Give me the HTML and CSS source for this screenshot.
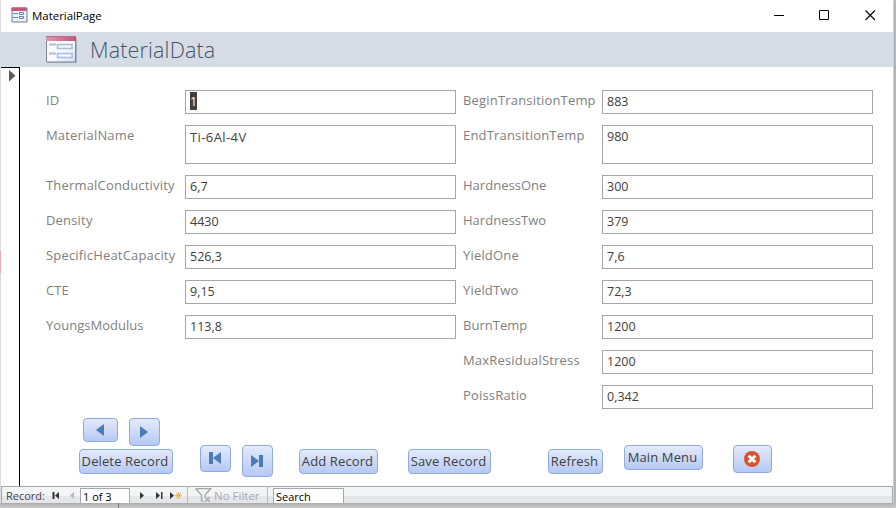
FILE: index.html
```html
<!DOCTYPE html>
<html lang="en">
<head>
<meta charset="utf-8">
<title>MaterialPage</title>
<link rel="stylesheet" href="styles.css">
</head>
<body>
<div class="window">
  <header class="titlebar">
    <svg class="appicon" width="17" height="16" viewBox="0 0 17 16"><path d="M1 1h15v14H1z" fill="#eef2fa" stroke="#6d7890"/><path d="M.5 .5h15V4H.5z" fill="#c4557b"/><path d="M2 6.500h5M2 10.500h5M8.500 5.500h4v2h-4zM8.500 9.500h4v2h-4z" fill="none" stroke="#6785b2"/></svg>
    <span class="caption">MaterialPage</span>
    <svg class="controls" width="104" height="12" viewBox="0 0 104 12" fill="none" stroke="#000"><path d="M1 5.500h10M46.500 .5h9v9h-9z"/><path d="M92.500 .5l9.500 9.500M102 .5l-9.500 9.500" stroke-width="1.100"/></svg>
  </header>
  <div class="formhead">
    <svg width="34" height="30" viewBox="0 0 34 30"><defs><linearGradient id="paper" x2="1" y2="1"><stop stop-color="#fff"/><stop offset=".55" stop-color="#f8faff"/><stop offset="1" stop-color="#d3ddef"/></linearGradient><linearGradient id="strip"><stop stop-color="#d99ab6"/><stop offset="1" stop-color="#c65277"/></linearGradient></defs><path d="M3 3h29v25H3z" fill="#8893a5" opacity=".55"/><path d="M1.500 1.500h29v25.500h-29z" fill="url(#paper)" stroke="#78849a"/><path d="M1 1h30v5H1z" fill="url(#strip)"/><path d="M1 1.500h30" stroke="#bd668a"/><path d="M4 9.500h7M4 18.500h7" stroke="#a9bedc" stroke-width="2"/><path d="M12.500 9.500h14.500v4H12.500zM12.500 18.500h14.500v4H12.500z" fill="#f3f7ff" stroke="#a9bedc" stroke-width="1.600"/></svg>
    <h1>MaterialData</h1>
  </div>
  <div class="body">
    <div class="selector"><svg width="7" height="12"><path d="M0 0l6.500 5.700L0 11.500z" fill="#5b5b5b"/></svg></div>
    <main>
      <div class="fields">
        <label>ID</label><div class="box"><span class="selected">1</span></div>
        <label>BeginTransitionTemp</label><div class="box">883</div>
        <label>MaterialName</label><div class="box name">Ti-6Al-4V</div>
        <label>EndTransitionTemp</label><div class="box">980</div>
        <label>ThermalConductivity</label><div class="box">6,7</div>
        <label class="tight">HardnessOne</label><div class="box">300</div>
        <label>Density</label><div class="box">4430</div>
        <label class="tight">HardnessTwo</label><div class="box">379</div>
        <label>SpecificHeatCapacity</label><div class="box">526,3</div>
        <label>YieldOne</label><div class="box">7,6</div>
        <label class="tight">CTE</label><div class="box">9,15</div>
        <label>YieldTwo</label><div class="box">72,3</div>
        <label class="tight">YoungsModulus</label><div class="box">113,8</div>
        <label class="tight">BurnTemp</label><div class="box">1200</div>
        <label class="right">MaxResidualStress</label><div class="box">1200</div>
        <label class="right">PoissRatio</label><div class="box">0,342</div>
      </div>
      <div class="steps">
        <button class="prev" aria-label="Previous"><svg width="8" height="12"><path d="M8 0v12L0 6z" fill="#4a7db5"/></svg></button>
        <button class="next" aria-label="Next"><svg width="8" height="12"><path d="M0 0v12l8-6z" fill="#4a7db5"/></svg></button>
      </div>
      <div class="actions">
        <button class="delete low">Delete Record</button>
        <button class="first" aria-label="First"><svg width="12" height="12"><path d="M0 0h4v12H0zM12 0v12L4 6z" fill="#4a7db5"/></svg></button>
        <button class="last" aria-label="Last"><svg width="12" height="12"><path d="M8 0h4v12H8zM0 0v12l8-6z" fill="#4a7db5"/></svg></button>
        <button class="add low">Add Record</button>
        <button class="save low">Save Record</button>
        <button class="refresh low">Refresh</button>
        <button class="menu">Main Menu</button>
        <button class="close" aria-label="Close"><svg width="16" height="16"><circle cx="8" cy="8" r="8" fill="#d9532e"/><path d="M4.700 4.700l6.600 6.600M11.300 4.700l-6.600 6.600" stroke="#fff" stroke-width="3"/></svg></button>
      </div>
    </main>
  </div>
  <footer>
    <span class="record">Record:</span>
    <svg class="nav-left" width="26" height="9"><path d="M.5 1h2v7h-2zM7 1v7L3 4.500z" fill="#333"/><path d="M22 1v7l-4-3.500z" fill="#b5b7ba"/></svg>
    <span class="position">1 of 3</span>
    <svg class="nav-right" width="44" height="9"><path d="M1 1v7l4-3.500zM17 1v7l4-3.500zM22 1h1.500v7H22zM31 1v7l4-3.500z" fill="#333"/><path d="M39.500 1v7M36 4.500h7M37 2l5 5M42 2l-5 5" stroke="#e6b65c"/></svg>
    <span class="divider"></span>
    <svg class="funnel" width="17" height="15" fill="none" stroke="#a5a7aa" stroke-width="1.300"><path d="M.7 .7h15L10 7v2M.7 .7L6.500 7v5.500l2 1.500M10 9l5 5M15 9l-5 5"/></svg>
    <span class="nofilter">No Filter</span>
    <span class="divider end"></span>
    <span class="search">Search</span>
  </footer>
</div>
<div class="marker"></div>
<div class="tick"></div>
</body>
</html>
```
FILE: styles.css
```css
* { box-sizing: border-box; }
body {
  margin: 0;
  width: 896px;
  height: 508px;
  overflow: hidden;
  position: relative;
  background: #c6c6c6;
  font-family: "Open Sans", "Noto Sans", sans-serif;
}
.window {
  width: 894px;
  height: 503px;
  border-left: 1px solid #dcdcdc;
  border-right: 1px solid #d5d5d5;
  background: #fff;
  box-shadow: 0 0 4px #8c8c8c;
  display: flex;
  flex-direction: column;
}
.titlebar { height: 32px; display: flex; align-items: flex-start; padding: 7px 16px 0 10px; flex: none; }
.caption { font-size: 11.5px; line-height: 17px; margin-left: 4px; letter-spacing: -.04px; color: #000; }
.controls { margin: 3px 0 0 auto; }
.formhead { height: 35px; flex: none; background: #d5dce6; display: flex; align-items: flex-start; padding: 3px 0 0 44px; }
h1 { margin: 0 0 0 11px; font-size: 21.5px; line-height: 30px; font-weight: 300; color: #44546a; letter-spacing: .15px; }
.body { flex: 1; min-height: 0; display: flex; }
.selector { width: 19px; border-top: 1px solid #000; border-right: 1px solid #000; padding: 2px 0 0 8px; line-height: 0; }
main { flex: 1; padding: 23px 0 0 26px; }
.fields {
  display: grid;
  grid-template-columns: 139px 271px 146px 271px;
  grid-template-rows: 24px 39px repeat(7, 24px);
  row-gap: 11px;
  height: 319px;
}
label { font-size: 13px; line-height: 20px; color: #7f7f7f; white-space: nowrap; letter-spacing: .18px; }
.tight { letter-spacing: .03px; }
label:nth-child(4n + 3), .right { padding-left: 7px; }
.right { grid-column: 3; }
.box { border: 1px solid #a6a6a6; padding: 1px 4px; font-size: 12.5px; line-height: 20px; color: #404040; letter-spacing: .02px; }
.name { font-size: 13px; letter-spacing: .4px; }
.selected { background: #404040; color: #fff; display: inline-block; width: 7px; height: 18px; line-height: 19px; }
.steps { display: flex; align-items: flex-start; gap: 11px; height: 27px; margin: 9px 0 0 37px; }
.actions { display: flex; align-items: flex-start; margin-left: 33px; }
button {
  border: 1px solid #8eabdc;
  border-radius: 4px;
  background: linear-gradient(#e3eafb, #cbd8f7 55%, #b5c9f5);
  padding: 0 2px 1px 0;
  display: flex;
  align-items: center;
  justify-content: center;
  flex: none;
  height: 25px;
  color: #404040;
  font: 13px/22px "Open Sans", sans-serif;
  letter-spacing: .12px;
  white-space: nowrap;
}
.low { margin-top: 4px; }
.prev { width: 35px; height: 24px; }
.next { width: 31px; height: 28px; padding-bottom: 0; }
.delete { width: 94px; }
.first { width: 31px; height: 27px; margin-left: 27px; }
.last { width: 31px; height: 32px; margin-left: 11px; }
.add { width: 79px; margin-left: 26px; }
.save { width: 83px; margin-left: 30px; }
.refresh { width: 55px; margin-left: 57px; }
.menu { width: 79px; margin-left: 21px; }
.close { width: 39px; height: 28px; margin-left: 30px; padding-bottom: 0; }
footer {
  height: 17px;
  flex: none;
  border: 1px solid #a5a8b0;
  border-bottom: 0;
  background: linear-gradient(#f3f4f6 9px, #e4e6ea 9px);
  display: flex;
  align-items: flex-start;
  font-size: 11.5px;
  line-height: 18px;
  color: #444;
  white-space: nowrap;
  overflow: hidden;
}
.record { width: 46px; margin-left: 4px; font-size: 11px; }
.nav-left { margin-top: 4px; }
.position, .search { background: #fff; border: 1px solid #a5a8b0; border-bottom: 0; height: 15px; line-height: 15px; margin-top: 1px; padding-left: 2px; color: #000; }
.position { width: 50px; margin-left: 2px; font-size: 11px; }
.nav-right { margin: 4px 0 0 9px; }
.divider { width: 1px; height: 17px; background: #b7bac0; margin-left: 4px; }
.funnel { margin: 1px 0 0 7px; }
.nofilter { color: #a8a9ab; width: 46px; margin-left: 2px; }
.divider.end { margin-left: 7px; }
.search { width: 71px; margin-left: 5px; font-size: 11px; }
.marker { position: absolute; left: 0; top: 251px; width: 1px; height: 22px; background: #f2a9ac; }
.tick { position: absolute; left: 118px; top: 503px; width: 1px; height: 5px; background: #777b84; }
```
